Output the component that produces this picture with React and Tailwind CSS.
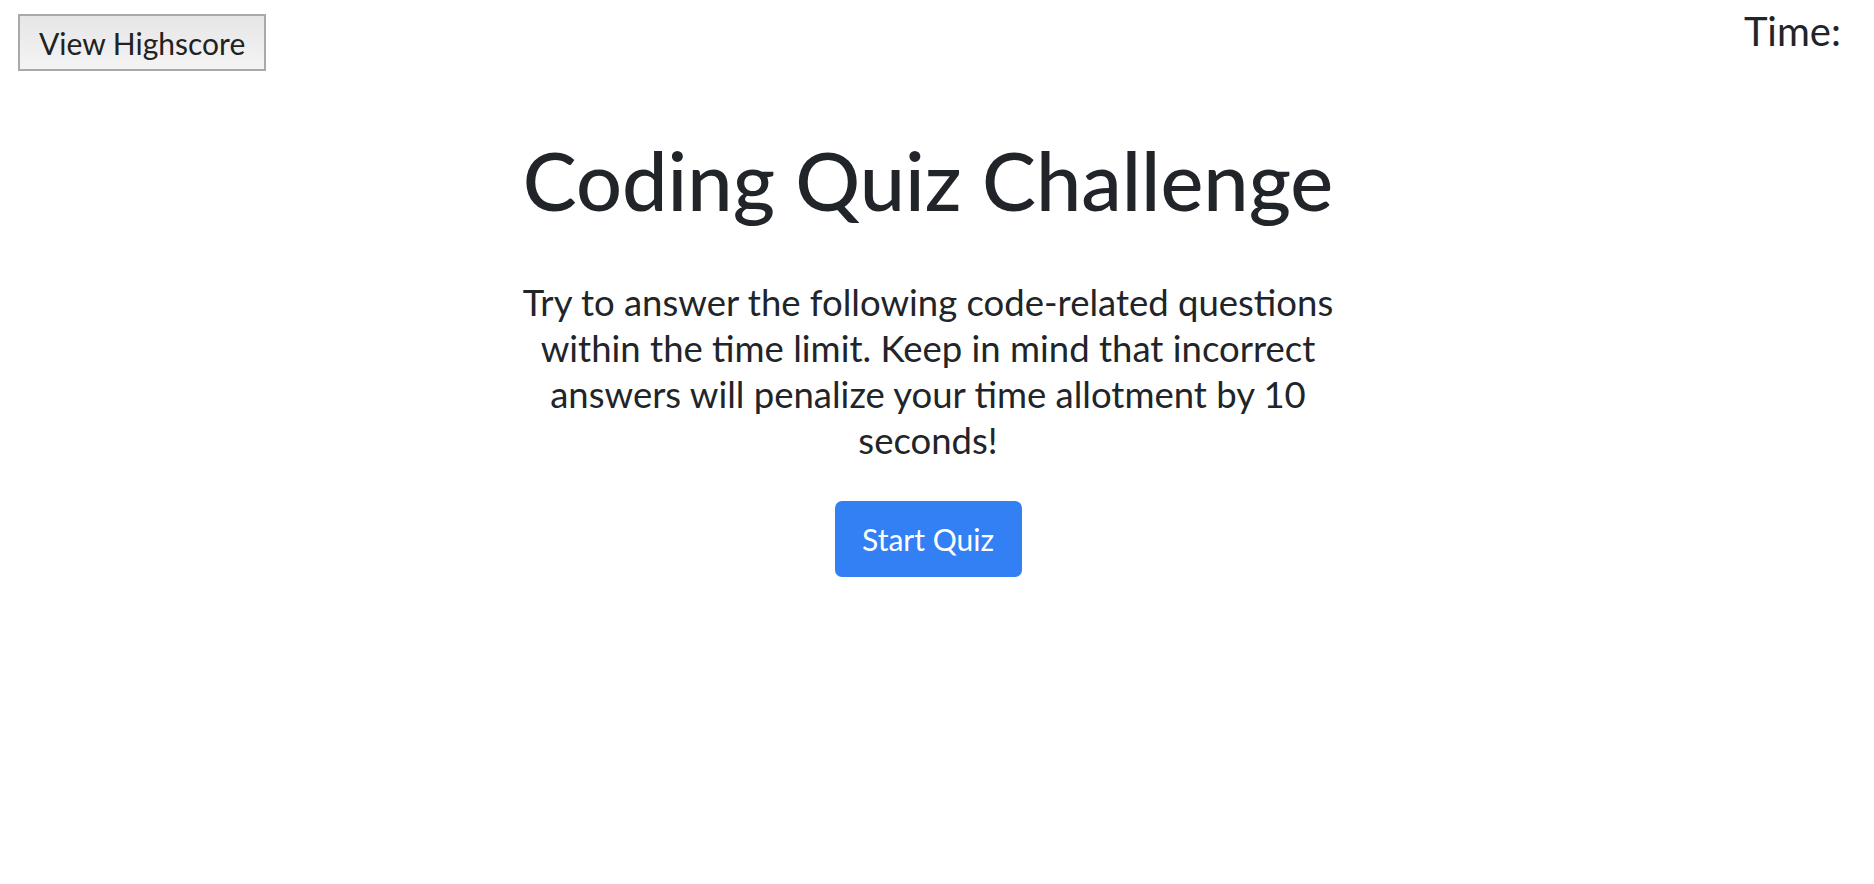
export default function App() {
  return (
    <div className="min-h-[884px] bg-white text-[#212529]" style={{ fontFamily: 'Lato, "Open Sans", sans-serif' }}>
      <header className="flex items-start justify-between">
        <button className="ml-[18px] mt-[14px] h-[57px] px-[19px] border-2 border-[#a9a9a9] bg-gradient-to-b from-[#e6e6e6] to-[#f4f4f4] text-[30px] leading-none text-[#222]">
          View Highscore
        </button>
        <div className="mr-[33px] mt-[6px] text-[40px] leading-[50px]">Time:</div>
      </header>

      <main className="flex flex-col items-center pr-[18px]">
        <h1 className="mt-[60px] text-[81px] leading-[1.2] font-medium">Coding Quiz Challenge</h1>
        <p className="mt-[51px] w-[830px] text-center text-[36.5px] leading-[46px]">
          Try to answer the following code-related questions within the time limit. Keep in mind that
          incorrect answers will penalize your time allotment by 10 seconds!
        </p>
        <button className="mt-[38px] h-[76px] w-[187px] rounded-[7px] bg-[#3380f5] text-[30px] text-white">
          Start Quiz
        </button>
      </main>
    </div>
  )
}
